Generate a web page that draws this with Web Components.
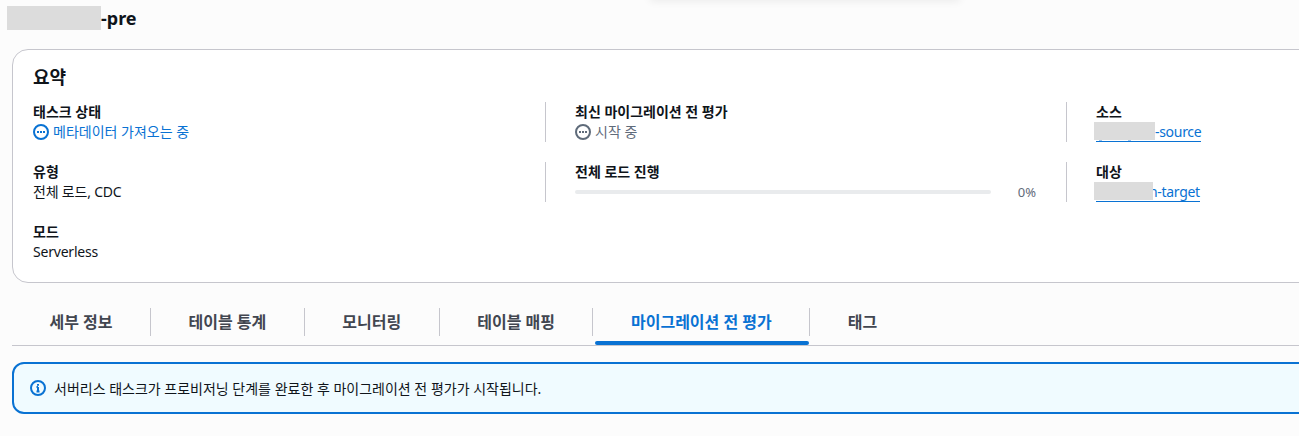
<!DOCTYPE html>
<html lang="ko">
<head>
<meta charset="utf-8">
<title>태스크</title>
<style>
    html, body { margin: 0; height: 436px; overflow: hidden; }
    body {
        background: #fcfcfc;
        color: #0f141a;
        font-family: "Noto Sans", "Noto Sans CJK KR", sans-serif;
        font-size: 14px;
    }
</style>
</head>
<body>
<task-page>
    <task-header slot="header">-pre</task-header>
    <summary-card slot="summary" heading="요약">
        <kv-item label="태스크 상태"><status-line tone="info">메타데이터 가져오는 중</status-line></kv-item>
        <kv-item label="최신 마이그레이션 전 평가" divider><status-line tone="muted">시작 중</status-line></kv-item>
        <kv-item label="소스" divider><masked-link offset="59" cover="59" specks>-source</masked-link></kv-item>
        <kv-item label="유형">전체 로드, CDC</kv-item>
        <kv-item label="전체 로드 진행" divider><progress-line value="0"></progress-line></kv-item>
        <kv-item label="대상" divider><masked-link offset="53" cover="57">n-target</masked-link></kv-item>
        <kv-item label="모드">Serverless</kv-item>
    </summary-card>
    <tab-bar slot="tabs">
        <tab-item>세부 정보</tab-item>
        <tab-item>테이블 통계</tab-item>
        <tab-item>모니터링</tab-item>
        <tab-item>테이블 매핑</tab-item>
        <tab-item active>마이그레이션 전 평가</tab-item>
        <tab-item>태그</tab-item>
    </tab-bar>
    <info-alert slot="alert">서버리스 태스크가 프로비저닝 단계를 완료한 후 마이그레이션 전 평가가 시작됩니다.</info-alert>
</task-page>

<script>
const DOTS_ICON = `
    <svg width="16" height="16" viewBox="0 0 16 16" fill="none" aria-hidden="true">
        <circle cx="8" cy="8" r="7" stroke="currentColor" stroke-width="2"/>
        <path d="M4 8h2M7 8h2M10 8h2" stroke="currentColor" stroke-width="2"/>
    </svg>`;

const INFO_ICON = `
    <svg width="16" height="16" viewBox="0 0 16 16" fill="none" aria-hidden="true">
        <circle cx="8" cy="8" r="7" stroke="currentColor" stroke-width="2"/>
        <path d="M8 11.5V7M6.5 7H8M6.5 11.5h3M8 4v1.8" stroke="currentColor" stroke-width="2"/>
    </svg>`;

class TaskPage extends HTMLElement {
    constructor() {
        super();
        const shadow = this.attachShadow({ mode: "open" });
        shadow.innerHTML = `
            <style>
                :host { display: block; position: relative; width: 1299px; height: 436px; overflow: hidden; }
                .top-shadow {
                    position: absolute;
                    top: -8px;
                    left: 650px;
                    width: 310px;
                    height: 8px;
                    box-shadow: 0 1px 8px rgba(0, 0, 0, 0.08);
                }
                .body {
                    display: flex;
                    flex-direction: column;
                    padding-left: 12px;
                }
            </style>
            <div class="top-shadow"></div>
            <slot name="header"></slot>
            <div class="body">
                <slot name="summary"></slot>
                <slot name="tabs"></slot>
                <slot name="alert"></slot>
            </div>
        `;
    }
}

class TaskHeader extends HTMLElement {
    constructor() {
        super();
        const shadow = this.attachShadow({ mode: "open" });
        shadow.innerHTML = `
            <style>
                :host {
                    display: flex;
                    align-items: center;
                    height: 49px;
                    box-sizing: border-box;
                    padding: 0 0 13px 7px;
                    font-size: 18px;
                    font-weight: 700;
                }
                .mask { width: 94px; height: 24px; background: #dcdcdc; }
            </style>
            <span class="mask"></span><slot></slot>
        `;
    }
}

class SummaryCard extends HTMLElement {
    constructor() {
        super();
        const shadow = this.attachShadow({ mode: "open" });
        shadow.innerHTML = `
            <style>
                :host {
                    display: block;
                    width: 1400px;
                    height: 234px;
                    box-sizing: border-box;
                    padding: 14px 20px 0;
                    background: #ffffff;
                    border: 1px solid #c6c6cd;
                    border-radius: 16px;
                }
                h2 {
                    margin: 0 0 12px;
                    font-size: 18px;
                    line-height: 26px;
                    font-weight: 700;
                }
                .grid {
                    display: grid;
                    grid-template-columns: 512px 521px 300px;
                    grid-auto-rows: 40px;
                    row-gap: 20px;
                }
            </style>
            <h2></h2>
            <div class="grid"><slot></slot></div>
        `;
        shadow.querySelector("h2").textContent = this.getAttribute("heading");
    }
}

class KvItem extends HTMLElement {
    constructor() {
        super();
        const shadow = this.attachShadow({ mode: "open" });
        shadow.innerHTML = `
            <style>
                :host { display: block; min-width: 0; line-height: 20px; color: #0f141a; font-size: 14px; }
                :host([divider]) { border-left: 1px solid #c6c6cd; padding-left: 29px; }
                .label { font-weight: 700; font-size: 14px; }
                .value { letter-spacing: -0.2px; }
            </style>
            <div class="label"></div>
            <div class="value"><slot></slot></div>
        `;
        shadow.querySelector(".label").textContent = this.getAttribute("label");
    }
}

class StatusLine extends HTMLElement {
    constructor() {
        super();
        const shadow = this.attachShadow({ mode: "open" });
        shadow.innerHTML = `
            <style>
                :host { display: flex; align-items: center; gap: 4px; height: 20px; font-size: 14px; letter-spacing: 0; color: #5f6b7a; }
                :host([tone="info"]) { color: #0972d3; }
                svg { display: block; flex: none; }
            </style>
            ${DOTS_ICON}
            <span><slot></slot></span>
        `;
    }
}

class ProgressLine extends HTMLElement {
    constructor() {
        super();
        const shadow = this.attachShadow({ mode: "open" });
        shadow.innerHTML = `
            <style>
                :host { display: flex; align-items: center; justify-content: space-between; width: 461px; height: 20px; letter-spacing: 0; }
                .track { width: 416px; height: 4px; border-radius: 2px; background: #e9ebed; }
                .bar { height: 100%; background: #0972d3; }
                .value { font-size: 13px; color: #5f6b7a; }
            </style>
            <div class="track"><div class="bar"></div></div>
            <span class="value"></span>
        `;
        const value = this.getAttribute("value");
        shadow.querySelector(".bar").style.width = value + "%";
        shadow.querySelector(".value").textContent = value + "%";
    }
}

// the resource name is greyed out in the screenshot, only its tail shows
class MaskedLink extends HTMLElement {
    constructor() {
        super();
        const shadow = this.attachShadow({ mode: "open" });
        const offset = Number(this.getAttribute("offset"));
        const cover = Number(this.getAttribute("cover"));
        shadow.innerHTML = `
            <style>
                :host { display: inline-block; position: relative; height: 20px; }
                a {
                    display: block;
                    height: 20px;
                    box-sizing: border-box;
                    padding-left: ${offset}px;
                    color: #0972d3;
                    font-size: 14px;
                    letter-spacing: -0.3px;
                    text-decoration: none;
                    border-bottom: 1px solid #0972d3;
                }
                .mask {
                    position: absolute;
                    top: 0;
                    left: -2px;
                    width: ${cover + 2}px;
                    height: 18px;
                    background: #dcdcdc;
                }
                :host([specks]) .mask::after {
                    content: "";
                    position: absolute;
                    top: 18px;
                    left: 5px;
                    width: 3px;
                    height: 1px;
                    background: #9cc4ec;
                    box-shadow: 29px 0 #9cc4ec;
                }
            </style>
            <a href="#"><slot></slot></a>
            <span class="mask"></span>
        `;
    }
}

class TabBar extends HTMLElement {
    constructor() {
        super();
        const shadow = this.attachShadow({ mode: "open" });
        shadow.innerHTML = `
            <style>
                :host {
                    display: flex;
                    width: 1400px;
                    height: 63px;
                    box-sizing: border-box;
                    margin-bottom: 16px;
                    padding-top: 25px;
                    border-bottom: 1px solid #c6c6cd;
                }
            </style>
            <slot></slot>
        `;
    }
}

class TabItem extends HTMLElement {
    constructor() {
        super();
        const shadow = this.attachShadow({ mode: "open" });
        shadow.innerHTML = `
            <style>
                :host {
                    display: block;
                    position: relative;
                    height: 28px;
                    padding: 0 37.5px;
                    border-right: 1px solid #c6c6cd;
                    color: #424650;
                    font-size: 16px;
                    font-weight: 700;
                    line-height: 28px;
                    white-space: nowrap;
                }
                :host(:last-child) { border-right: none; }
                :host([active]) { color: #0972d3; }
                :host([active])::after {
                    content: "";
                    position: absolute;
                    left: 2px;
                    right: 0;
                    bottom: -9px;
                    height: 4px;
                    border-radius: 2px;
                    background: #0972d3;
                }
            </style>
            <slot></slot>
        `;
    }
}

class InfoAlert extends HTMLElement {
    constructor() {
        super();
        const shadow = this.attachShadow({ mode: "open" });
        shadow.innerHTML = `
            <style>
                :host {
                    display: flex;
                    align-items: center;
                    gap: 8px;
                    width: 1400px;
                    height: 52px;
                    box-sizing: border-box;
                    padding-left: 16px;
                    background: #f0fbff;
                    border: 2px solid #0972d3;
                    border-radius: 12px;
                    font-size: 14px;
                    color: #0f141a;
                }
                svg { display: block; flex: none; color: #0972d3; }
            </style>
            ${INFO_ICON}
            <span><slot></slot></span>
        `;
    }
}

customElements.define("task-page", TaskPage);
customElements.define("task-header", TaskHeader);
customElements.define("summary-card", SummaryCard);
customElements.define("kv-item", KvItem);
customElements.define("status-line", StatusLine);
customElements.define("progress-line", ProgressLine);
customElements.define("masked-link", MaskedLink);
customElements.define("tab-bar", TabBar);
customElements.define("tab-item", TabItem);
customElements.define("info-alert", InfoAlert);
</script>
</body>
</html>
